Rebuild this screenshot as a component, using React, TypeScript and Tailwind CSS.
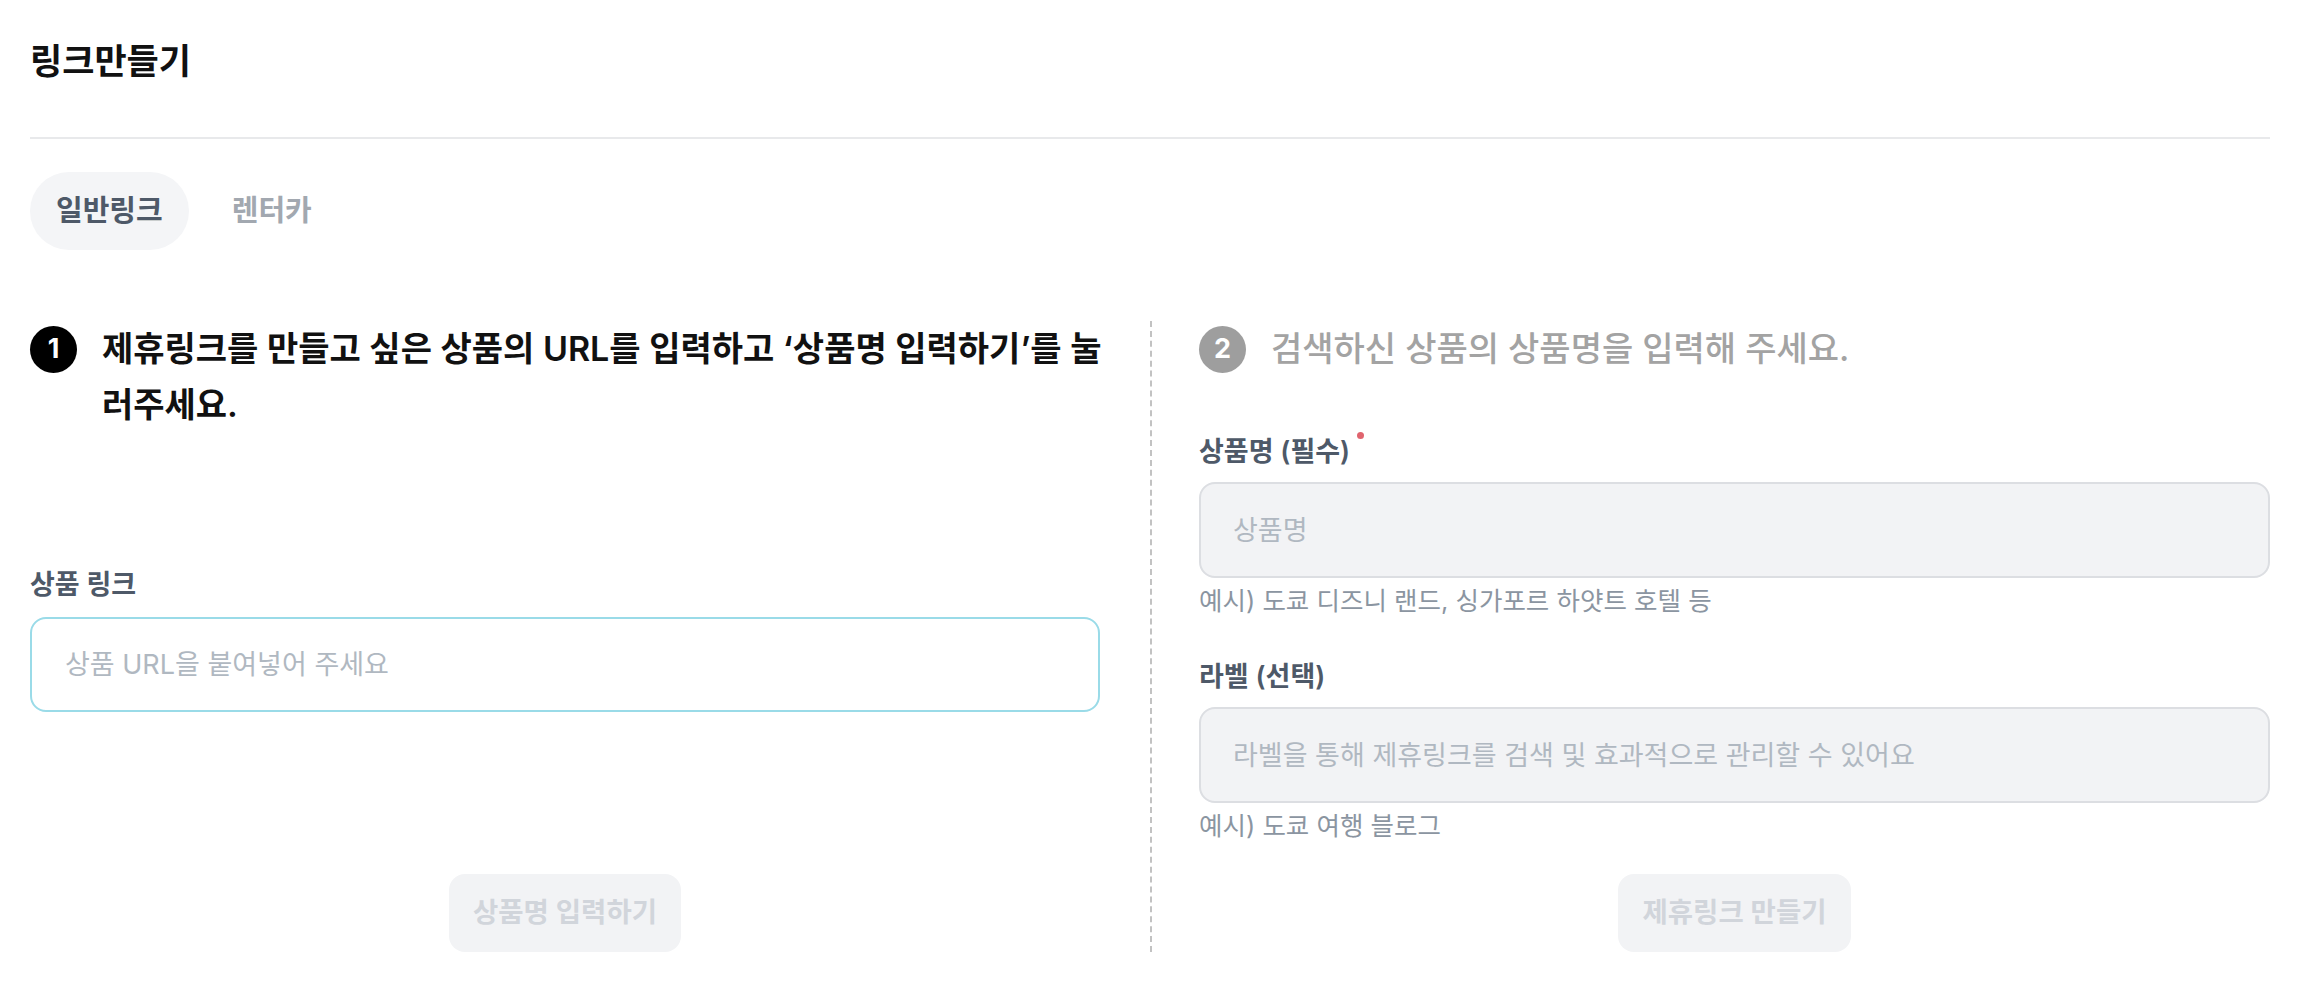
import { useState } from 'react'

const tabs = ['일반링크', '렌터카']

function StepBadge({ n, active }: { n: number; active: boolean }) {
    return (
        <span
            className={
                active
                    ? 'mt-[5px] flex h-[47px] w-[47px] shrink-0 items-center justify-center rounded-full bg-black text-[27px] font-bold text-white'
                    : 'mt-[5px] flex h-[47px] w-[47px] shrink-0 items-center justify-center rounded-full bg-[#9e9e9e] text-[27px] font-bold text-white'
            }
        >
            {n}
        </span>
    )
}

function Field({
    label,
    required,
    placeholder,
    hint,
}: {
    label: string
    required?: boolean
    placeholder: string
    hint: string
}) {
    return (
        <div>
            <div className="flex items-start">
                <span className="text-[27px] leading-[36px] font-semibold text-[#4e5968]">{label}</span>
                {required && <span className="relative -top-[2px] ml-[7px] h-[7px] w-[7px] rounded-full bg-[#e0646e]" />}
            </div>
            <input
                disabled
                placeholder={placeholder}
                className="mt-[12px] h-[96px] w-full rounded-[16px] border-2 border-[#dcdee2] bg-[#f2f3f5] px-[32px] text-[27px] outline-none placeholder:text-[#b0b8c1]"
            />
            <p className="mt-[6px] text-[25.5px] leading-[34px] text-[#8b95a1]">{hint}</p>
        </div>
    )
}

export default function App() {
    const [tab, setTab] = useState(0)

    return (
        <div className="min-h-screen bg-white pr-[36px] pb-[30px] pl-[30px] font-['Inter','Noto_Sans_CJK_KR',sans-serif] text-[#111]">
            <header className="border-b-2 border-[#e8e9eb] pt-[39px] pb-[54px]">
                <h1 className="text-[35px] leading-[44px] font-bold text-[#111]">링크만들기</h1>
            </header>

            <nav className="mt-[33px] flex gap-[17px]">
                {tabs.map((t, i) => (
                    <button
                        key={t}
                        onClick={() => setTab(i)}
                        className={
                            i === tab
                                ? 'h-[78px] rounded-full bg-[#f4f5f7] px-[26px] text-[29px] font-semibold text-[#4e5968]'
                                : 'h-[78px] rounded-full px-[26px] text-[29px] font-semibold text-[#a2a8b0]'
                        }
                    >
                        {t}
                    </button>
                ))}
            </nav>

            <main className="mt-[71px] grid grid-cols-2">
                {/* step 1 */}
                <section className="flex flex-col pr-[50px]">
                    <div className="flex items-start gap-[25px]">
                        <StepBadge n={1} active />
                        <h2 className="text-[34px] leading-[56px] font-semibold text-[#111]">
                            <span className="whitespace-nowrap">제휴링크를 만들고 싶은 상품의 URL를 입력하고 ‘상품명 입력하기’를 눌</span>
                            <br />
                            러주세요.
                        </h2>
                    </div>

                    <div className="mt-[134px]">
                        <label className="block text-[27px] leading-[36px] font-semibold text-[#4e5968]">상품 링크</label>
                        <input
                            placeholder="상품 URL을 붙여넣어 주세요"
                            className="mt-[14px] h-[95px] w-full rounded-[16px] border-2 border-[#9adbe8] bg-white px-[33px] text-[27px] outline-none placeholder:text-[#b0b8c1]"
                        />
                    </div>

                    <div className="mt-auto flex justify-center">
                        <button disabled className="h-[78px] rounded-[16px] bg-[#f2f3f5] px-[24px] text-[27.5px] font-semibold text-[#d1d5db]">
                            상품명 입력하기
                        </button>
                    </div>
                </section>

                {/* step 2 */}
                <section className="flex flex-col border-l-2 border-dashed border-[#c2c2c2] pl-[47px]">
                    <div className="flex items-start gap-[25px]">
                        <StepBadge n={2} active={false} />
                        <h2 className="text-[34px] leading-[56px] font-medium text-[#a3a3a3]">검색하신 상품의 상품명을 입력해 주세요.</h2>
                    </div>

                    <div className="mt-[57px]">
                        <Field label="상품명 (필수)" required placeholder="상품명" hint="예시) 도쿄 디즈니 랜드, 싱가포르 하얏트 호텔 등" />
                    </div>
                    <div className="mt-[41px]">
                        <Field label="라벨 (선택)" placeholder="라벨을 통해 제휴링크를 검색 및 효과적으로 관리할 수 있어요" hint="예시) 도쿄 여행 블로그" />
                    </div>

                    <div className="mt-[31px] flex justify-center">
                        <button disabled className="h-[78px] rounded-[16px] bg-[#f2f3f5] px-[24px] text-[27.5px] font-semibold text-[#d1d5db]">
                            제휴링크 만들기
                        </button>
                    </div>
                </section>
            </main>
        </div>
    )
}
